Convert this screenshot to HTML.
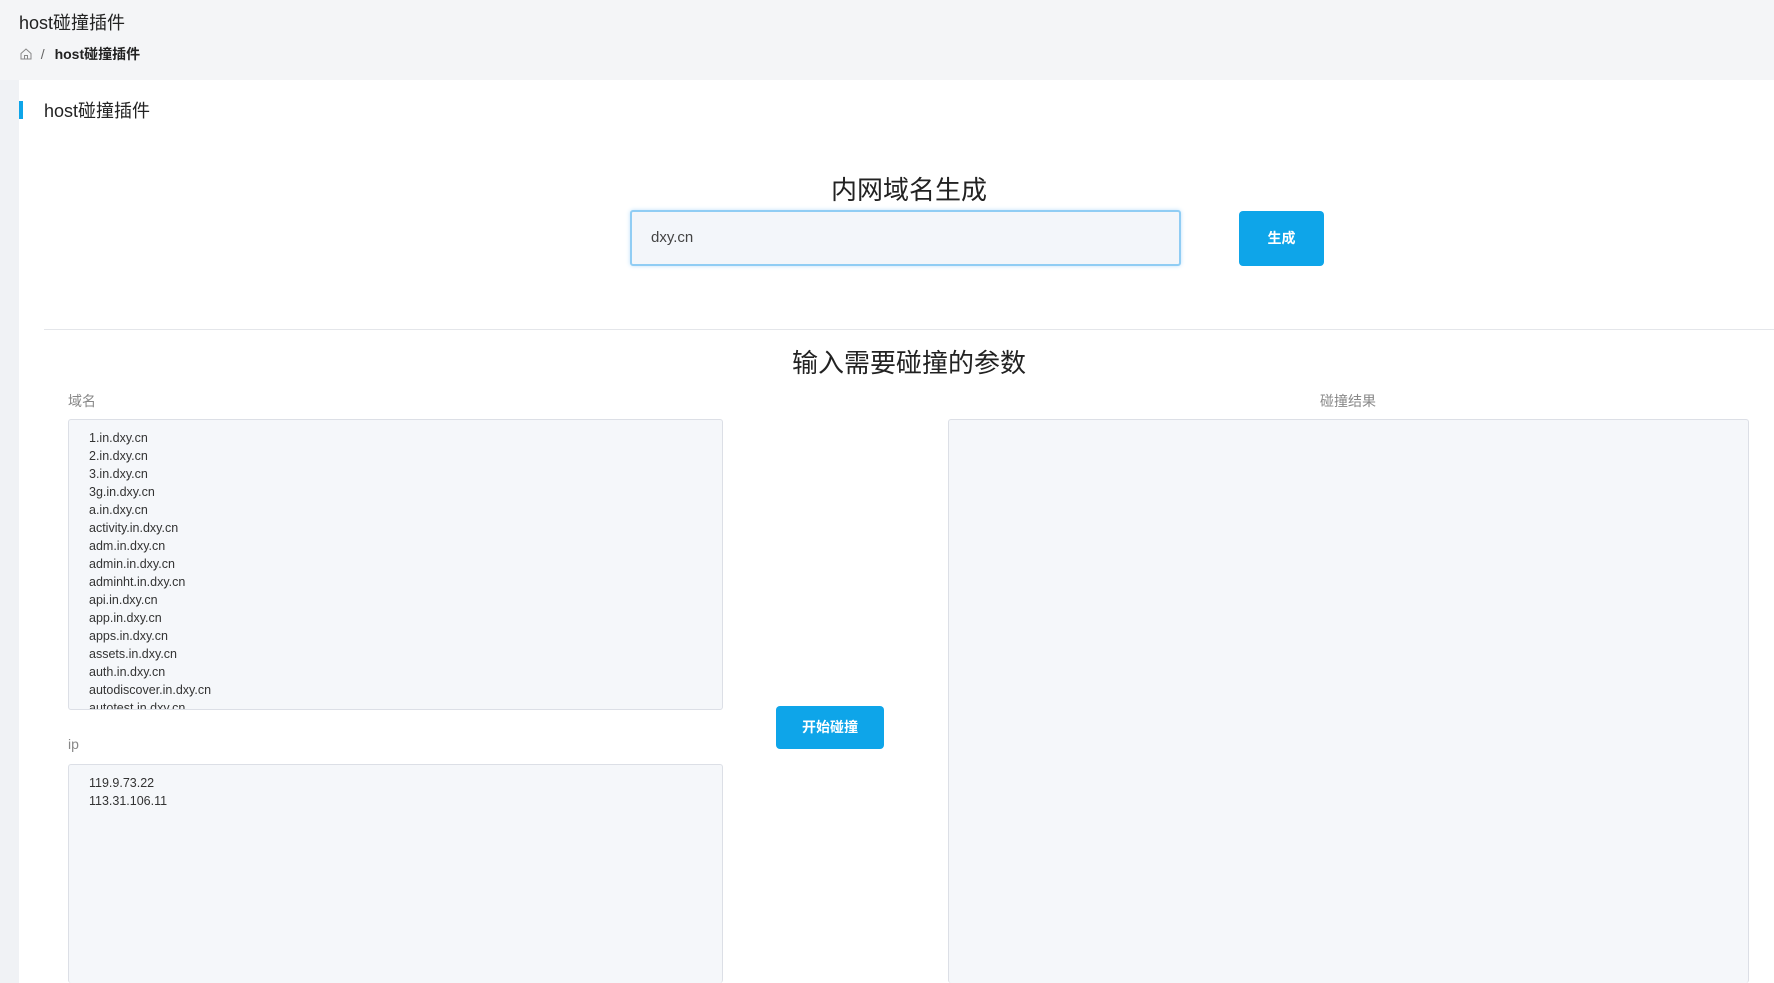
<!DOCTYPE html>
<html style="overflow:hidden;width:1774px;height:983px"><head><meta charset="utf-8"><style>
*{box-sizing:border-box;margin:0;padding:0}
body{width:1774px;height:983px;overflow:hidden;background:#f0f2f5;font-family:"Liberation Sans","Noto Sans CJK SC",sans-serif;color:#222;position:relative}
.hdr{position:absolute;left:0;top:0;width:1774px;height:80px;background:#f4f5f7}
.t1{position:absolute;left:19px;top:9px;font-size:18px;color:#222}
.bc{position:absolute;left:19px;top:44px;font-size:14px;color:#666}
.bc b{color:#222;margin-left:6px}
.card{position:absolute;left:19px;top:80px;width:1755px;height:903px;background:#fff}
.bar{position:absolute;left:19px;top:101px;width:4px;height:18px;background:#0ea5e9}
.t2{position:absolute;left:44px;top:97px;font-size:18px}
.h{position:absolute;font-size:26px;color:#222;text-align:center;width:400px}
.inp{position:absolute;left:630px;top:210px;width:551px;height:56px;border:2px solid #90cdf4;border-radius:3px;background:#f3f6fa;box-shadow:0 0 4px #bfe0fa;font-size:15px;color:#444;padding:17px 19px}
.btn{position:absolute;background:#0ea5e9;color:#fff;border-radius:4px;font-size:14px;text-align:center;font-weight:bold}
.hr{position:absolute;left:44px;top:329px;width:1730px;height:1px;background:#e4e6ea}
.lbl{position:absolute;font-size:14px;color:#888}
.ta{position:absolute;background:#f5f7fa;border:1px solid #dcdfe6;border-radius:3px;font-size:12.5px;line-height:18px;color:#333;padding:9px 20px;overflow:hidden}
</style></head><body>
<div class="hdr"></div>
<div class="t1">host碰撞插件</div>
<div class="bc"><svg width="14" height="14" viewBox="0 0 14 14" style="vertical-align:-2px"><path d="M2 6.5L7 2l5 4.5V12H2z M5.5 12V8.5h3V12" fill="none" stroke="#888" stroke-width="1"/></svg> &nbsp;/ <b>host碰撞插件</b></div>
<div class="card"></div>
<div class="bar"></div>
<div class="t2">host碰撞插件</div>
<div class="h" style="left:709px;top:170px">内网域名生成</div>
<div class="inp">dxy.cn</div>
<div class="btn" style="left:1239px;top:211px;width:85px;height:55px;line-height:55px">生成</div>
<div class="hr"></div>
<div class="h" style="left:709px;top:343px">输入需要碰撞的参数</div>
<div class="lbl" style="left:68px;top:391px">域名</div>
<div class="ta" style="left:68px;top:419px;width:655px;height:291px">1.in.dxy.cn<br>2.in.dxy.cn<br>3.in.dxy.cn<br>3g.in.dxy.cn<br>a.in.dxy.cn<br>activity.in.dxy.cn<br>adm.in.dxy.cn<br>admin.in.dxy.cn<br>adminht.in.dxy.cn<br>api.in.dxy.cn<br>app.in.dxy.cn<br>apps.in.dxy.cn<br>assets.in.dxy.cn<br>auth.in.dxy.cn<br>autodiscover.in.dxy.cn<br>autotest.in.dxy.cn</div>
<div class="lbl" style="left:68px;top:736px">ip</div>
<div class="ta" style="left:68px;top:764px;width:655px;height:219px;border-bottom:none">119.9.73.22<br>113.31.106.11</div>
<div class="btn" style="left:776px;top:706px;width:108px;height:43px;line-height:43px">开始碰撞</div>
<div class="lbl" style="left:1320px;top:391px">碰撞结果</div>
<div class="ta" style="left:948px;top:419px;width:801px;height:564px;border-bottom:none"></div>
</body></html>
